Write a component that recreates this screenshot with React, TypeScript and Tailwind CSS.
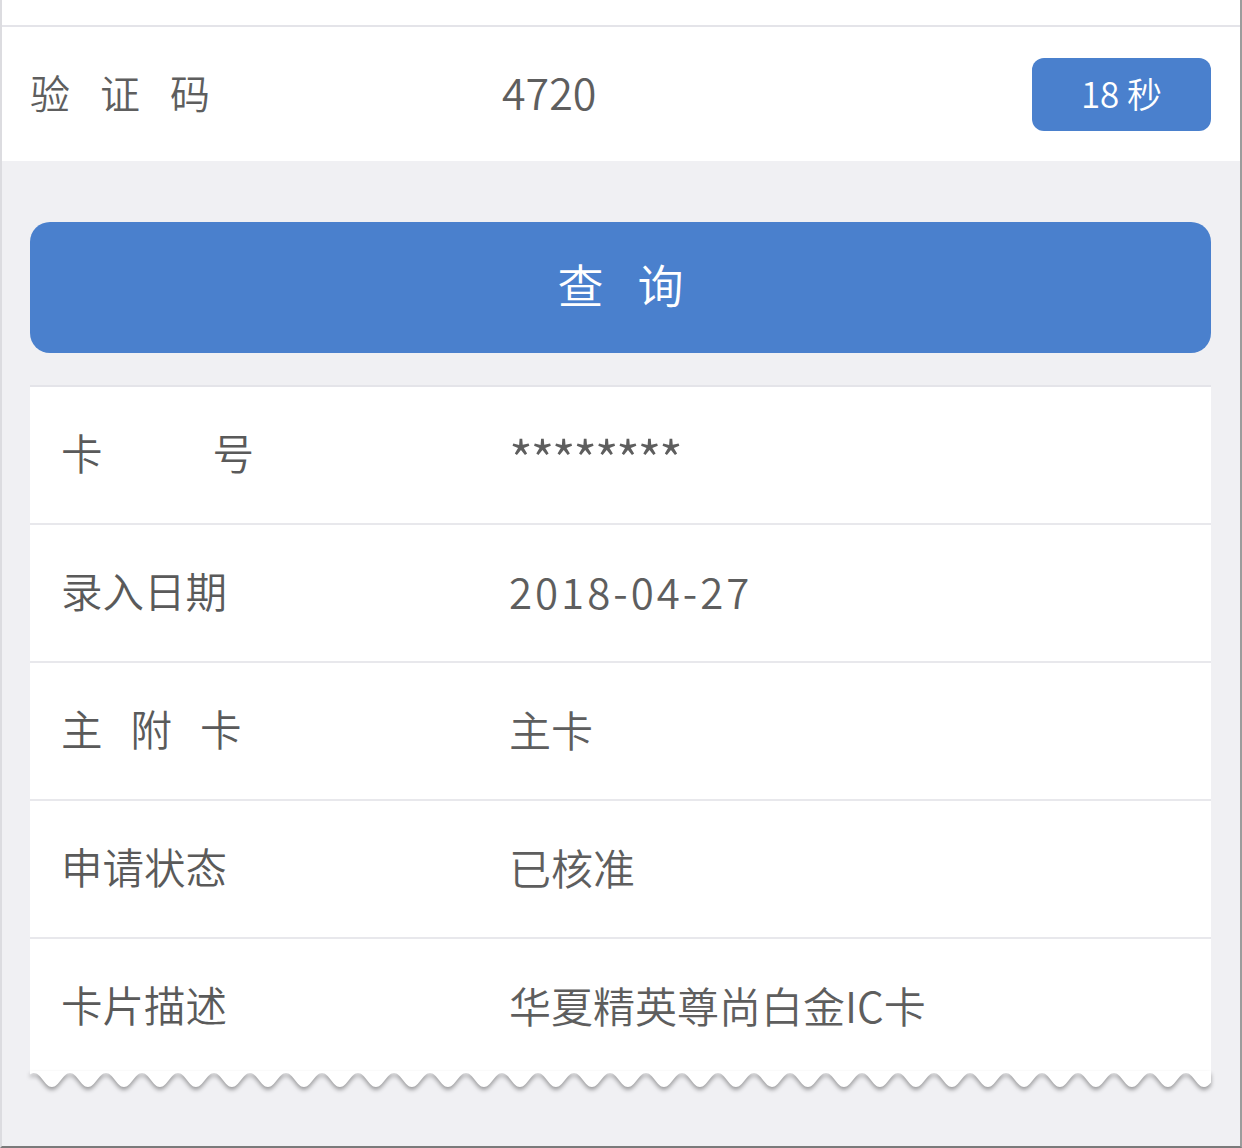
import React from 'react';

const BLUE = 'bg-[#4a80cd]';

type Row = { label: string[]; gap: string; value: string; valueClass?: string };

const rows: Row[] = [
  { label: ['卡', '号'], gap: 'gap-[110px]', value: '********', valueClass: 'text-[52px] tracking-[-2.5px] pt-[10px]' },
  { label: ['录入日期'], gap: '', value: '2018-04-27', valueClass: 'tracking-[3px]' },
  { label: ['主', '附', '卡'], gap: 'gap-[28px]', value: '主卡' },
  { label: ['申请状态'], gap: '', value: '已核准' },
  { label: ['卡片描述'], gap: '', value: '华夏精英尊尚白金IC卡' },
];

// rounded wave along the bottom edge of the card
const buildWave = (width: number) => {
  const period = 36;
  const top = 2;
  const bottom = 16;
  const x0 = -32;
  let d = `M${x0} 0 L${x0} ${top}`;
  let x = x0;
  while (x < width + period) {
    d += ` C${x + period * 0.2} ${top} ${x + period * 0.3} ${bottom} ${x + period / 2} ${bottom}`;
    d += ` C${x + period * 0.7} ${bottom} ${x + period * 0.8} ${top} ${x + period} ${top}`;
    x += period;
  }
  d += ` L${x} 0 Z`;
  return d;
};

const App: React.FC = () => {
  const cardWidth = 1181;
  return (
    <div
      className="w-[1242px] h-[1148px] bg-[#f0f0f3] border-l-2 border-l-[#dcdce0] border-r-2 border-r-[#9c9c9c] border-b-2 border-b-[#7a7a7a] overflow-hidden font-[350]"
      style={{ fontFamily: '"Noto Sans CJK SC", "Noto Sans", sans-serif' }}
    >
      {/* top: verification code row */}
      <div className="bg-white h-[25px]" />
      <div className="h-[2px] bg-[#e4e4e9]" />
      <div className="bg-white h-[134px] flex items-center pl-[28px] pr-[29px]">
        <div className="flex gap-[30px] text-[40px] leading-none text-[#5e5e5e] w-[472px] pb-[5px]">
          <span>验</span>
          <span>证</span>
          <span>码</span>
        </div>
        <div className="flex-1 text-[43px] leading-none text-[#5e5e5e] pb-[5px]">4720</div>
        <button className={`${BLUE} w-[179px] h-[73px] rounded-[12px] text-white text-[35px] leading-none flex items-center justify-center pb-[3px]`}>
          18 秒
        </button>
      </div>

      <div className="pl-[28px] pr-[29px]">
        {/* query button */}
        <button className={`${BLUE} mt-[61px] w-full h-[131px] rounded-[20px] text-white text-[46px] leading-none flex items-center justify-center gap-[34px] pb-[10px]`}>
          <span>查</span>
          <span>询</span>
        </button>

        {/* result card */}
        <div className="mt-[32px]">
          <div className="bg-white border-t-2 border-[#e4e4e9]">
            {rows.map((r, i) => {
              const last = i === rows.length - 1;
              return (
                <div
                  key={i}
                  className={`flex items-center pl-[31px] pb-[5px] ${last ? 'h-[132px] pt-[4px]' : 'h-[138px] border-b-2 border-[#e8e8ec]'}`}
                >
                  <div className={`w-[448px] flex ${r.gap} text-[41.5px] leading-none text-[#5a5a5a]`}>
                    {r.label.map((c, j) => (
                      <span key={j}>{c}</span>
                    ))}
                  </div>
                  <div className={`text-[42px] leading-none text-[#5e5e5e] ${r.valueClass ?? ''}`}>{r.value}</div>
                </div>
              );
            })}
          </div>
          <svg
            width={cardWidth}
            height={24}
            viewBox={`0 0 ${cardWidth} 24`}
            className="block drop-shadow-[0_3px_2px_rgba(0,0,0,0.35)]"
          >
            <path d={buildWave(cardWidth)} fill="#ffffff" />
          </svg>
        </div>
      </div>
    </div>
  );
};

export default App;
